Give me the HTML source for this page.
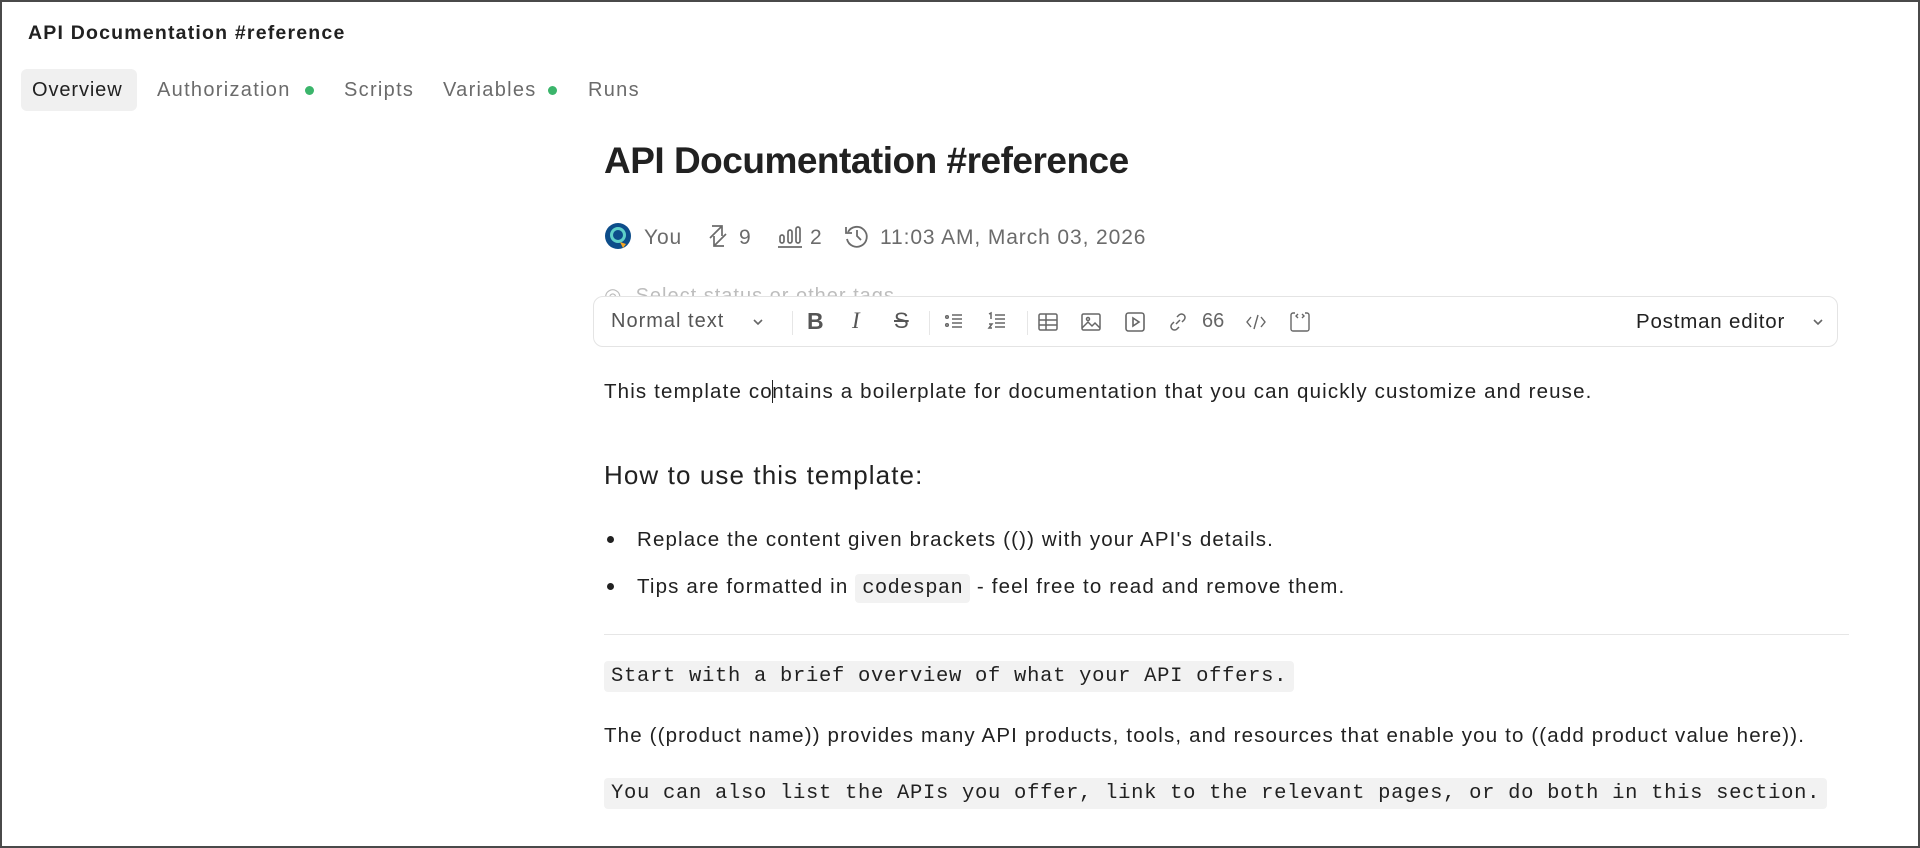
<!DOCTYPE html>
<html><head><meta charset="utf-8"><style>
*{margin:0;padding:0;box-sizing:border-box}
html,body{width:1920px;height:848px;overflow:hidden;background:#fff}
body{font-family:"Liberation Sans",sans-serif;color:#212121;position:relative}
.frame{position:absolute;left:0;top:0;width:1920px;height:848px;border:2px solid #4a4a4a}
.abs{position:absolute;white-space:nowrap}
.tab{position:absolute;top:69px;height:42px;line-height:42px;font-size:20px;color:#6b6b6b;letter-spacing:1.3px}
.dot{position:absolute;top:86px;width:9px;height:9px;border-radius:50%;background:#3bb56b}
.meta{font-size:21px;color:#6b6b6b;top:226px;letter-spacing:0.9px}
.tb{position:absolute;left:593px;top:296px;width:1245px;height:51px;border:1px solid #e4e4e4;border-radius:10px;background:#fff}
.ic{position:absolute;top:14px}
.sep{position:absolute;top:14px;width:1px;height:24px;background:#e6e6e6}
.p{font-size:20.5px;color:#212121;left:604px;letter-spacing:1.15px}
.code{font-family:"Liberation Mono",monospace;font-size:20.5px;background:#f2f2f2;border-radius:4px;padding:4px 7px;letter-spacing:0.7px;color:#212121}
</style></head><body>
<div class="frame"></div>
<div class="abs" style="left:28px;top:22px;font-size:19.5px;font-weight:bold;letter-spacing:1.2px;color:#212121">API Documentation #reference</div>
<div class="tab" style="left:21px;width:116px;background:#f0f0f0;border-radius:6px;color:#212121;padding-left:11px;letter-spacing:0.9px">Overview</div>
<div class="tab" style="left:157px">Authorization</div><div class="dot" style="left:305px"></div>
<div class="tab" style="left:344px">Scripts</div>
<div class="tab" style="left:443px">Variables</div><div class="dot" style="left:548px"></div>
<div class="tab" style="left:588px">Runs</div>

<div class="abs" style="left:604px;top:140px;font-size:37px;font-weight:bold;letter-spacing:-0.5px;color:#212121">API Documentation #reference</div>

<svg class="abs" style="left:604px;top:222px" width="28" height="28" viewBox="0 0 28 28"><circle cx="14" cy="14" r="13" fill="#0d4d8a"/><circle cx="14" cy="13" r="8" fill="#5fd0c8"/><circle cx="14" cy="13" r="5" fill="#0d4d8a"/><path d="M16 20 L22 22 L19 26 Z" fill="#f5a623"/></svg>
<div class="abs meta" style="left:644px">You</div>
<svg class="abs" style="left:706px;top:222px" width="26" height="28" viewBox="0 0 26 28" fill="none" stroke="#6b6b6b" stroke-width="1.7"><path d="M6 4h10v10M16 4L4 16M20 12L8 24M8 14v10h10" /></svg>
<div class="abs meta" style="left:739px">9</div>
<svg class="abs" style="left:776px;top:222px" width="28" height="28" viewBox="0 0 28 28" fill="none" stroke="#6b6b6b" stroke-width="1.7"><rect x="4" y="13" width="4" height="8" rx="2"/><rect x="12" y="8" width="4" height="13" rx="2"/><rect x="20" y="5" width="4" height="16" rx="2"/><path d="M2 25h24"/></svg>
<div class="abs meta" style="left:810px">2</div>
<svg class="abs" style="left:843px;top:222px" width="28" height="28" viewBox="0 0 28 28" fill="none" stroke="#6b6b6b" stroke-width="1.8"><path d="M5 10a10 10 0 1 1 -1 7"/><path d="M3 5v6h6"/><path d="M14 8v6l4 4"/></svg>
<div class="abs meta" style="left:880px">11:03 AM, March 03, 2026</div>

<div class="abs" style="left:604px;top:284px;font-size:20px;color:#bdbdbd;height:12px;overflow:hidden;line-height:24px;letter-spacing:1px">◎&nbsp;&nbsp;Select status or other tags</div>

<div class="tb">
<div class="abs" style="left:17px;top:13px;font-size:20px;color:#555;letter-spacing:1px">Normal text</div>
<svg class="ic" style="left:157px;top:18px" width="14" height="14" viewBox="0 0 14 14" fill="none" stroke="#666" stroke-width="1.6"><path d="M3 5l4 4 4-4"/></svg>
<div class="sep" style="left:198px"></div>
<div class="abs" style="left:213px;top:11px;font-size:23px;font-weight:bold;color:#555">B</div>
<div class="abs" style="left:258px;top:11px;font-size:23px;font-style:italic;font-family:'Liberation Serif',serif;color:#555">I</div>
<div class="abs" style="left:300px;top:11px;font-size:22px;text-decoration:line-through;color:#555">S</div>
<div class="sep" style="left:335px"></div>
<svg class="ic" style="left:349px" width="22" height="22" viewBox="0 0 22 22" fill="none" stroke="#666" stroke-width="1.5"><circle cx="4" cy="6" r="1.3"/><circle cx="4" cy="14" r="1.3"/><path d="M9 4h10M9 8h10M9 12h10M9 16h10"/></svg>
<svg class="ic" style="left:392px" width="22" height="22" viewBox="0 0 22 22" fill="none" stroke="#666" stroke-width="1.5"><path d="M3 3l2-1v6M3 13h3l-3 4h3M9 4h10M9 8h10M9 12h10M9 16h10"/></svg>
<div class="sep" style="left:433px"></div>
<svg class="ic" style="left:443px" width="22" height="22" viewBox="0 0 22 22" fill="none" stroke="#666" stroke-width="1.5"><rect x="2" y="3" width="18" height="16" rx="1.5"/><path d="M2 9h18M2 14h18M9 3v16"/></svg>
<svg class="ic" style="left:486px" width="22" height="22" viewBox="0 0 22 22" fill="none" stroke="#666" stroke-width="1.5"><rect x="2" y="3" width="18" height="16" rx="1.5"/><circle cx="8" cy="8" r="1.5"/><path d="M2 17l6-6 4 4 3-3 5 5"/></svg>
<svg class="ic" style="left:530px" width="22" height="22" viewBox="0 0 22 22" fill="none" stroke="#666" stroke-width="1.6"><rect x="2" y="2" width="18" height="18" rx="2.5"/><path d="M9 7l6 4-6 4z"/></svg>
<svg class="ic" style="left:573px" width="22" height="22" viewBox="0 0 22 22" fill="none" stroke="#666" stroke-width="1.5"><path d="M9 13l4-4M10 6l2-2a3.5 3.5 0 0 1 5 5l-2 2M12 16l-2 2a3.5 3.5 0 0 1-5-5l2-2"/></svg>
<div class="abs" style="left:608px;top:13px;font-size:20px;color:#666">66</div>
<svg class="ic" style="left:651px" width="22" height="22" viewBox="0 0 22 22" fill="none" stroke="#666" stroke-width="1.4"><path d="M6 6l-4 5 4 5M16 6l4 5-4 5M13 4l-4 14"/></svg>
<svg class="ic" style="left:695px" width="22" height="22" viewBox="0 0 22 22" fill="none" stroke="#666" stroke-width="1.4"><path d="M6 2H4a2 2 0 0 0-2 2v14a2 2 0 0 0 2 2h14a2 2 0 0 0 2-2V4a2 2 0 0 0-2-2h-2M9 3l-2 2 2 2M13 3l2 2-2 2"/></svg>
<div class="abs" style="left:1042px;top:13px;font-size:20.5px;color:#212121;letter-spacing:0.8px">Postman editor</div>
<svg class="ic" style="left:1217px;top:18px" width="14" height="14" viewBox="0 0 14 14" fill="none" stroke="#666" stroke-width="1.6"><path d="M3 5l4 4 4-4"/></svg>
</div>

<div class="abs p" style="top:380px">This template co<span style="border-left:1.5px solid #212121;margin:0 -0.75px"></span>ntains a boilerplate for documentation that you can quickly customize and reuse.</div>
<div class="abs" style="left:604px;top:460px;font-size:26px;color:#212121;letter-spacing:1.1px">How to use this template:</div>
<div class="abs" style="left:607px;top:527px;width:7px;height:7px;border-radius:50%;background:#212121;margin-top:9px"></div>
<div class="abs p" style="left:637px;top:528px">Replace the content given brackets (()) with your API's details.</div>
<div class="abs" style="left:607px;top:574px;width:7px;height:7px;border-radius:50%;background:#212121;margin-top:9px"></div>
<div class="abs p" style="left:637px;top:575px">Tips are formatted in <span class="code" style="padding:3px 7px;letter-spacing:0.3px">codespan</span> - feel free to read and remove them.</div>
<div class="abs" style="left:604px;top:634px;width:1245px;height:1px;background:#e6e6e6"></div>
<div class="abs" style="left:604px;top:665px"><span class="code">Start with a brief overview of what your API offers.</span></div>
<div class="abs p" style="top:724px">The ((product name)) provides many API products, tools, and resources that enable you to ((add product value here)).</div>
<div class="abs" style="left:604px;top:782px"><span class="code">You can also list the APIs you offer, link to the relevant pages, or do both in this section.</span></div>
</body></html>
